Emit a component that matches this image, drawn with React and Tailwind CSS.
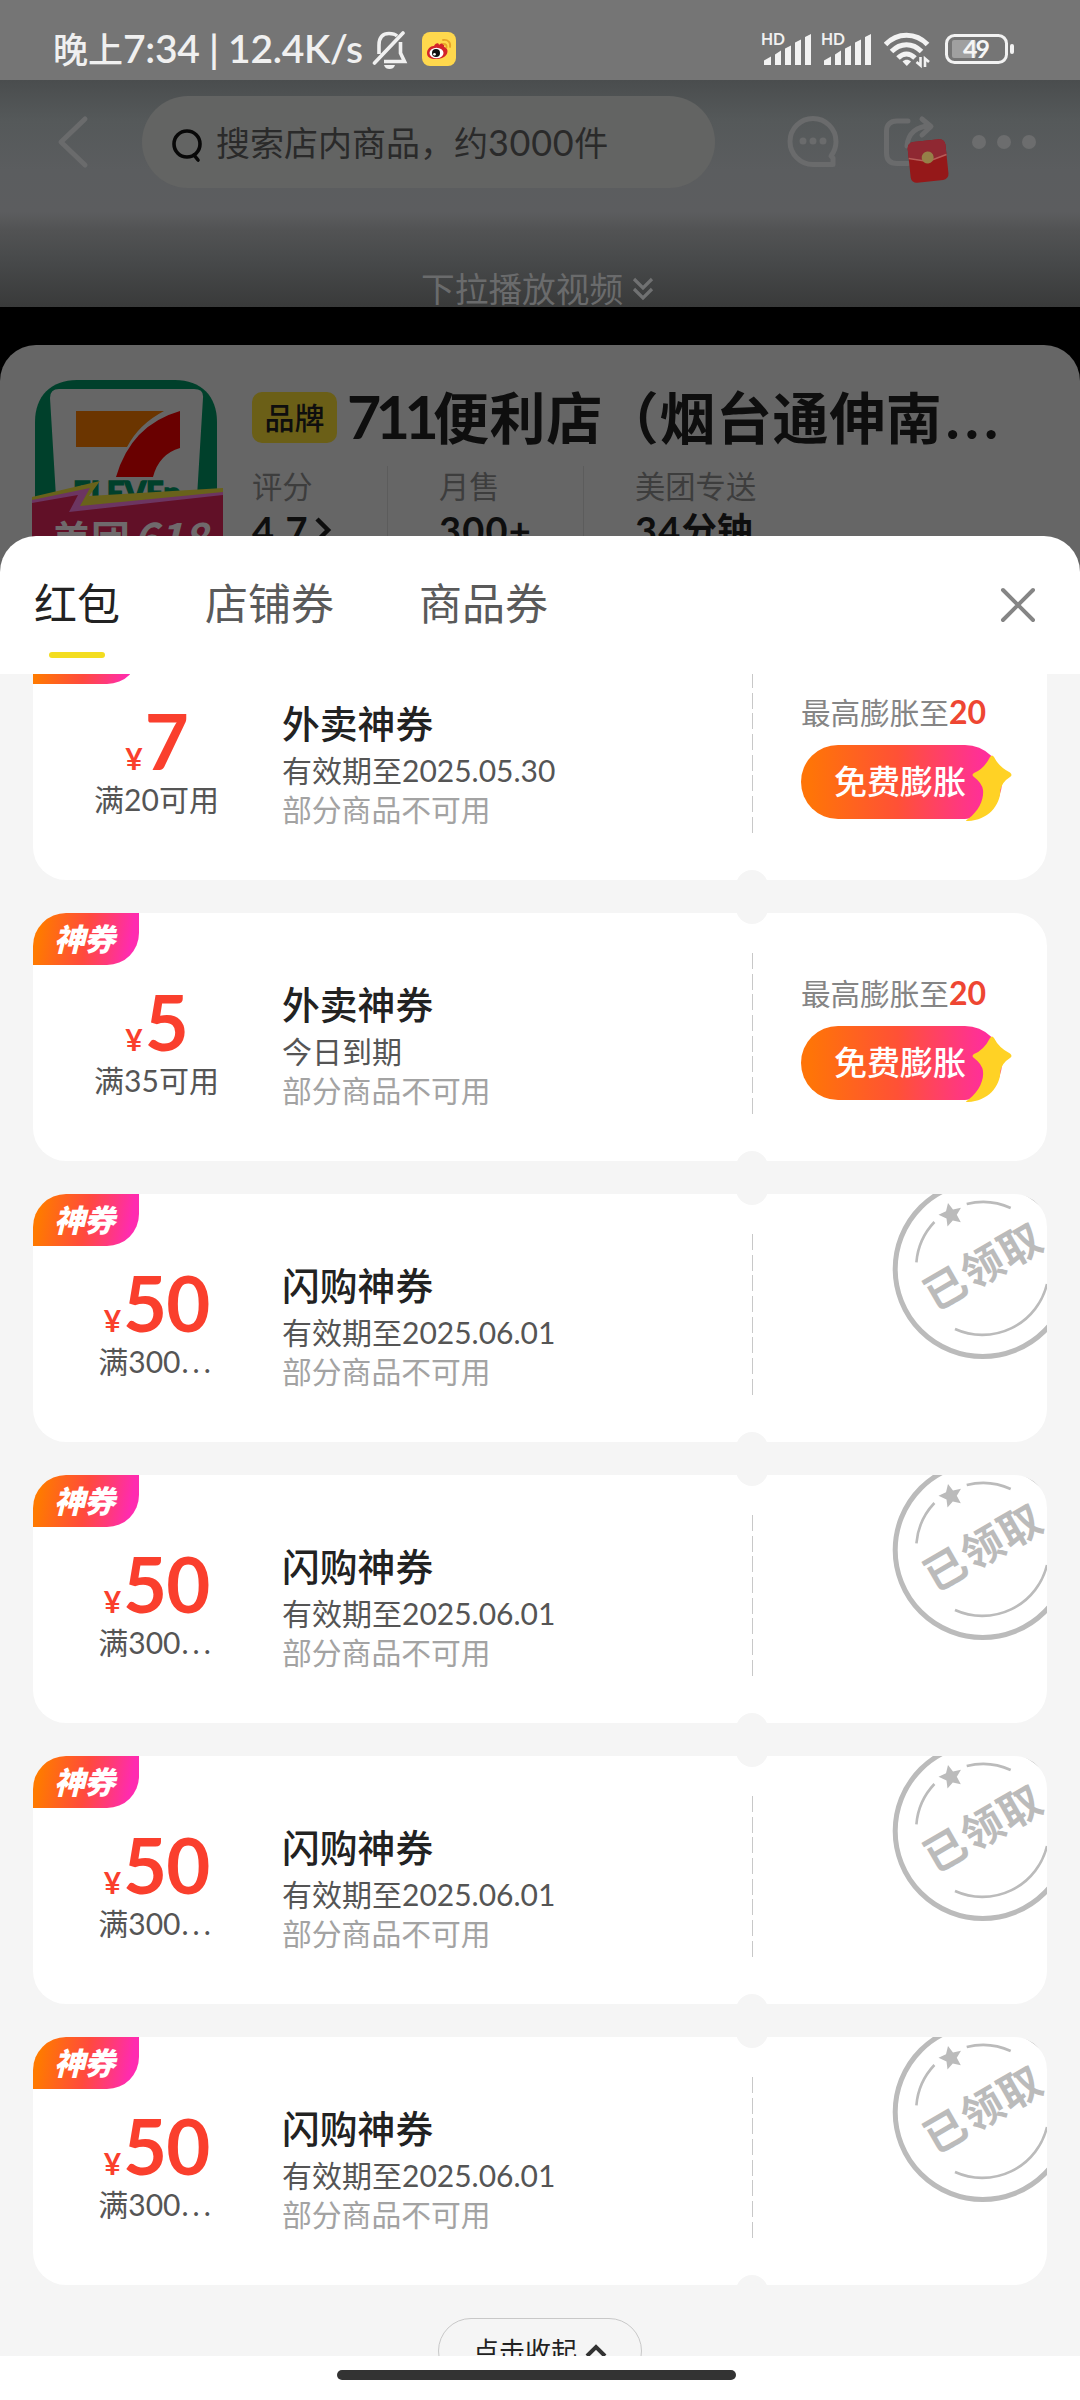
import React from "react";

const coupons = [
  { amount: "7", limit: "满20可用", title: "外卖神券", date: "有效期至2025.05.30", boost: true },
  { amount: "5", limit: "满35可用", title: "外卖神券", date: "今日到期", boost: true },
  { amount: "50", limit: "满300", more: true, title: "闪购神券", date: "有效期至2025.06.01" },
  { amount: "50", limit: "满300", more: true, title: "闪购神券", date: "有效期至2025.06.01" },
  { amount: "50", limit: "满300", more: true, title: "闪购神券", date: "有效期至2025.06.01" },
  { amount: "50", limit: "满300", more: true, title: "闪购神券", date: "有效期至2025.06.01" },
];

function Signal() {
  return (
    <svg width="52" height="36" viewBox="0 0 52 36" className="block overflow-visible">
      <text x="-1" y="13" fontSize="17" fontWeight="700" fill="#f0f0f0" fontFamily="Lato" textLength="24" lengthAdjust="spacingAndGlyphs">HD</text>
      <path d="M2 28.500l7-4v8.500H2z M13 22.500l6-4v14.500h-6z M23 16.500l6-3v19.500h-6z M33 10.500l6-3v25.500h-6z M43 5l6-3v31h-6z" fill="#f2f2f2" />
    </svg>
  );
}

function StatusBar() {
  return (
    <div className="flex h-20 shrink-0 items-start bg-[#757575] text-[#f0f0f0]">
      <div className="ml-[53px] mt-[27px] flex w-[312px] items-baseline whitespace-nowrap text-[35px] leading-[42px] font-medium">
        晚上<span className="text-[39px] font-semibold tracking-[-0.300px]">7:34 | 12.4K/s</span>
      </div>
      <svg className="ml-[7px] mt-[30px]" width="36" height="40" viewBox="0 0 36 40" fill="none" stroke="#f0f0f0" strokeWidth="3.600">
        <path d="M2.500 33L31 3" strokeLinecap="round" />
        <path d="M7 24V15C7 7 11 3.500 17 3.500C21 3.500 23 4 25 6" />
        <path d="M28.500 12V23L32.500 31.500H12" />
        <path d="M12 35H23C22 38 20 39 17.500 39S13 38 12 35Z" fill="#f0f0f0" stroke="none" />
      </svg>
      <svg className="ml-[14px] mt-[32px]" width="34" height="34" viewBox="0 0 34 34">
        <rect width="34" height="34" rx="8" fill="#ffd84d" />
        <path d="M5 21C5 17 9 13.500 12 14c1-3 5-4 5-1 3-3 6-1 5 2 6 1 5 12-8 12C8 27 5 25 5 21z" fill="#d3232b" />
        <ellipse cx="14.500" cy="21" rx="7" ry="5.200" fill="#fff" />
        <circle cx="14" cy="21" r="4" fill="#111" />
        <circle cx="12.500" cy="22.300" r="1.300" fill="#fff" />
        <path d="M21 8c5-1 8 3 7 7M21.500 12c2.500 0 3.500 1 3 3.500" fill="none" stroke="#e8a428" strokeWidth="1.800" strokeLinecap="round" />
      </svg>
      <div className="ml-[306px] mt-[32px]"><Signal /></div>
      <div className="ml-[8px] mt-[32px]"><Signal /></div>
      <svg className="ml-[10px] mt-[32px]" width="48" height="38" viewBox="0 0 48 38" fill="none" stroke="#f2f2f2" strokeWidth="5">
        <path d="M1.500 12.500C13 0 32 0 43.500 12.500M7.500 19.500c9-9 21-9 30 0M14 26c5.500-5.500 11.500-5.500 17 0" />
        <path d="M18.500 29.500c2.500-2.500 6-2.500 8.500 0l-4.200 4.500z" fill="#f2f2f2" stroke="none" />
        <path d="M36.500 25v8.500l-4-3.500M41 35v-8.500l4 3.500" strokeWidth="2.600" />
      </svg>
      <svg className="ml-[13px] mt-[34px]" width="70" height="31" viewBox="0 0 70 31">
        <rect x="1.500" y="1.500" width="60" height="27" rx="8" fill="none" stroke="#f2f2f2" strokeWidth="3" />
        <rect x="7" y="6" width="24" height="18" rx="2" fill="#a0a0a0" />
        <rect x="65" y="10" width="4" height="10" rx="2" fill="#f2f2f2" />
        <text x="18" y="24" fontSize="25" fontWeight="700" fill="#f5f5f5" fontFamily="Lato" textLength="27">49</text>
      </svg>
    </div>
  );
}

function Hero() {
  return (
    <div className="flex h-[227px] shrink-0 flex-col bg-[linear-gradient(180deg,#4a4d4e_0%,#55595a_18%,#5b5d5f_40%,#5c5d5f_58%,#525354_66%,#47494a_80%,#393a3a_100%)]">
      <div className="mt-4 flex h-[92px] items-center">
        <svg className="ml-[56px]" width="34" height="56" viewBox="0 0 34 56" fill="none" stroke="#6a6b6c" strokeWidth="5" strokeLinecap="round" strokeLinejoin="round">
          <path d="M29 5L5 28L29 51" />
        </svg>
        <div className="ml-[52px] flex h-[92px] w-[573px] items-center rounded-full bg-[#636463]">
          <svg className="ml-[28px] mt-2" width="34" height="38" viewBox="0 0 34 38" fill="none" stroke="#080808" strokeWidth="3.600">
            <circle cx="17" cy="17" r="13" />
            <path d="M24 28l4 5" strokeLinecap="round" />
          </svg>
          <div className="ml-[12px] whitespace-nowrap text-[34px] leading-[44px] text-[#2a2a2a]">搜索店内商品，约<span className="text-[36px] tracking-[0.700px]">3000</span>件</div>
        </div>
        <svg className="ml-[70px]" width="56" height="60" viewBox="0 0 56 60" fill="none" stroke="#6a6b6c" strokeWidth="5">
          <path d="M48 46V52.500H28A23 23 0 1 1 51 29.500C51 36 49 40 46 44Z" strokeLinejoin="round" />
          <g fill="#6a6b6c" stroke="none"><circle cx="18" cy="29" r="3.500" /><circle cx="28" cy="29" r="3.500" /><circle cx="38" cy="29" r="3.500" /></g>
        </svg>
        <svg className="ml-[41px] overflow-visible" width="72" height="72" viewBox="0 0 72 72" fill="none" stroke="#6a6b6c" strokeWidth="5">
          <path d="M26 15H15C8 15 4.500 19 4.500 25V47C4.500 54 8 57.500 15 57.500H26" strokeLinecap="round" />
          <path d="M25 40C26 27 35 20 48 20M40 13l9 7.500-9 8.500" strokeLinecap="round" strokeLinejoin="round" />
          <g transform="translate(-3 1.500) rotate(-6 49 53)" stroke="none">
            <rect x="30" y="33" width="38" height="41" rx="6" fill="#951819" />
            <path d="M30 49V39a6 6 0 0 1 6-6h26a6 6 0 0 1 6 6v10L49 54z" fill="#8f2832" />
            <path d="M30 49l19 5 19-5" fill="none" stroke="#b75d59" strokeWidth="1.500" />
            <circle cx="49" cy="50" r="6" fill="#958048" />
          </g>
        </svg>
        <div className="ml-[18px] flex gap-[11px]">
          <i className="size-[14px] rounded-full bg-[#6c6d6e]" />
          <i className="size-[14px] rounded-full bg-[#6c6d6e]" />
          <i className="size-[14px] rounded-full bg-[#6c6d6e]" />
        </div>
      </div>
      <div className="mt-[79px] flex items-center pl-[421px] text-[33.700px] leading-[44px] text-[#6a6b6c]">
        <span className="whitespace-nowrap">下拉播放视频</span>
        <svg className="ml-[9px]" width="22" height="26" viewBox="0 0 22 26" fill="none" stroke="#707172" strokeWidth="3.200">
          <path d="M2 3l9 9 9-9M2 13l9 9 9-9" />
        </svg>
      </div>
    </div>
  );
}

function StoreLogo() {
  return (
    <svg className="ml-8 mt-[35px] shrink-0" width="191" height="200" viewBox="0 0 191 200">
      <path d="M3 200V42C3 16 19 0 45 0H143C169 0 185 16 185 42V200Z" fill="#00402b" />
      <path d="M18 18Q18 9 27 9H162Q172 9 171 18L160 200H29Z" fill="#666" />
      <path d="M44 31H132Q107 44 95 67H44Z" fill="#6b3500" />
      <path d="M148 31V68Q127 74 121 97H84Q99 45 148 31Z" fill="#690000" />
      <text x="41" y="125" fontSize="33" fontWeight="900" fill="#00402b" stroke="#00402b" strokeWidth="1.500" fontFamily="Lato" textLength="108" lengthAdjust="spacingAndGlyphs">ELEVEn</text>
      <path d="M0 117L68 101L57 116L191 108V200H0Z" fill="#69621b" />
      <path d="M0 120L58 108L48 126L191 112V200H0Z" fill="#6c3561" />
      <path d="M0 123L46 115L37 132L191 115V200H0Z" fill="#611027" />
      <text x="20" y="174" fontSize="39" fontWeight="700" fill="#6f6a6c" fontFamily="Noto Sans CJK SC">美团<tspan dx="3" fontSize="42" fontStyle="italic">618</tspan></text>
    </svg>
  );
}

function StoreInfo() {
  const stats = [["评分", "4.7", ""], ["月售", "300+", ""], ["美团专送", "34", "分钟"]];
  return (
    <div className="mt-[38px] flex h-[230px] shrink-0 overflow-hidden rounded-t-[36px] bg-[#666]">
      <StoreLogo />
      <div className="ml-[29px] mt-[37px]">
        <div className="flex h-[70px] items-center">
          <span className="flex h-[51px] w-[85px] items-center justify-center rounded-[10px] bg-[#6b5f17] text-[30px] leading-[40px] font-medium text-[#0e0e0e]">品牌</span>
          <span className="ml-[10px] flex items-baseline whitespace-nowrap text-[56px] leading-[70px] font-bold tracking-[0.600px] text-[#0e0e0e]">
            <span className="w-[86px] text-[59px] tracking-[-5.500px]">711</span>便利店（烟台通伸南<span className="ml-[3px] text-[60px] tracking-[5px]">...</span>
          </span>
        </div>
        <div className="mt-[14px] flex">
          {stats.map(([label, value, unit], i) => (
            <div key={label} className={["w-[135px]", "w-[196px] border-l border-[#5c5c5c] pl-[51px]", "border-l border-[#5c5c5c] pl-[51px]"][i]}>
              <div className="-mt-px whitespace-nowrap text-[30.300px] leading-[42px] text-[#3d3d3d]">{label}</div>
              <div className="-mt-px flex items-center whitespace-nowrap text-[35.500px] leading-[48px] font-bold text-[#0e0e0e]">
                <span className="text-[38px] tracking-[1.200px]">{value}</span>{unit}
                {i === 0 && (
                  <svg className="ml-[5px]" width="18" height="26" viewBox="0 0 18 26" fill="none" stroke="#0e0e0e" strokeWidth="4.500"><path d="M3 2l11 11L3 24" /></svg>
                )}
              </div>
            </div>
          ))}
        </div>
      </div>
    </div>
  );
}

function Stamp() {
  return (
    <svg className="absolute right-0 top-0" width="160" height="180" viewBox="854 0 160 180">
      <g fill="none" stroke="#bbb">
        <circle cx="949.700" cy="75" r="87.500" strokeWidth="5" />
        <path d="M883.400 68.300A66.500 66.500 0 0 1 901.400 28M933.700 10A66.500 66.500 0 0 1 977.700 14M922 135A66.500 66.500 0 0 0 1014 90" strokeWidth="2.600" />
      </g>
      <path d="M914 11l5 6.500 8-1.800-4.200 7 4 7.500-8-1.700-5.300 6-1-8-8-3.800 7.500-3.400z" fill="#bbb" transform="translate(1 -2)" />
      <text x="951" y="87" textAnchor="middle" fontSize="42" fontWeight="700" letterSpacing="1" fill="#bbb" fontFamily="Noto Sans CJK SC" transform="rotate(-30 951.700 74)">已领取</text>
    </svg>
  );
}

function Boost() {
  return (
    <div className="ml-[48px] w-[213px] pt-[60px]">
      <div className="whitespace-nowrap text-[29.600px] leading-[42px] text-[#858585]">最高膨胀至<b className="text-[32px]/[32px] text-[#ee4632]">20</b></div>
      <div className="relative mt-[11px] flex h-[74px] w-[201px] items-center rounded-full bg-[linear-gradient(90deg,#ff7408_5%,#ff5136_48%,#ff2e9c_92%)] pl-[33px]">
        <span className="-mt-[2px] whitespace-nowrap text-[33px] leading-[44px] font-medium text-white">免费膨胀</span>
        <svg className="absolute left-[163px] top-[9px]" width="50" height="68" viewBox="0 0 50 68">
          <path d="M26 3Q28 0 30 3Q35 13 46 18.500Q49 21 46 23Q38 28 36.500 36C36 52 24 66 4 67Q0 67 4 65C16 56 20 44 19 36Q18 29 10 23Q7 21 10 19Q20 15 26 3Z" fill="#ffd225" />
        </svg>
      </div>
    </div>
  );
}

function Coupon({ amount, limit, more, title, date, boost }) {
  return (
    <div className="relative flex h-[248px] shrink-0 overflow-hidden rounded-[33px] bg-white">
      <div className="absolute left-0 top-0 flex h-[52px] w-[106px] items-center rounded-br-[32px] bg-[linear-gradient(100deg,#ff7a00_8%,#ff4a3d_50%,#ff2bb0_90%)] pl-[21px]">
        <span className="text-[31px] leading-[40px] font-black italic tracking-[-1px] text-white">神券</span>
      </div>
      <div className="w-[247px] shrink-0 pt-[72px] text-center">
        <div className="flex h-[74px] items-baseline justify-center gap-[2px] font-bold leading-[74px] text-[#fa3f2d]">
          <span className="text-[30px]">¥</span>
          <span className="text-[76px] tracking-[-1px]">{amount}</span>
        </div>
        <div className="whitespace-nowrap text-[30px] leading-[42px] text-[#555]">
          {limit}{more && <span className="ml-px tracking-[4px]">...</span>}
        </div>
      </div>
      <div className="w-[472px] shrink-0 pl-[2px] pt-[66px]">
        <div className="text-[37.800px] leading-[52px] font-medium text-[#222]">{title}</div>
        <div className="-mt-px text-[30px] leading-[42px] text-[#555]">{date}</div>
        <div className="text-[29.800px] leading-[38px] text-[#a3a3a3]">部分商品不可用</div>
      </div>
      <div className="mt-[40px] h-[161px] w-px shrink-0 bg-[repeating-linear-gradient(180deg,#c8c8c8_0,#c8c8c8_16px,transparent_16px,transparent_20.700px)]" />
      <i className="absolute left-[703px] top-[-21.500px] size-8 rounded-full bg-[#f5f5f5]" />
      <i className="absolute bottom-[-21.500px] left-[703px] size-8 rounded-full bg-[#f5f5f5]" />
      {boost ? <Boost /> : <Stamp />}
    </div>
  );
}

export default function App() {
  return (
    <div className="flex h-[2400px] w-[1080px] flex-col overflow-hidden bg-black font-['Lato','Noto_Sans_CJK_SC',sans-serif]">
      <StatusBar />
      <Hero />
      <StoreInfo />
      <div className="relative -mt-[39px] flex grow flex-col rounded-t-[36px] bg-white">
        <div className="flex h-[138px] shrink-0 items-start pt-[41px] text-[43px] leading-[54px] text-[#5a5a5a]">
          <div className="ml-[34px] flex w-[86px] flex-col items-center whitespace-nowrap text-[#222]">
            红包
            <i className="mt-[21px] h-[6px] w-[56px] rounded-full bg-[#f3dd20]" />
          </div>
          <div className="ml-[85px] whitespace-nowrap">店铺券</div>
          <div className="ml-[85px] whitespace-nowrap">商品券</div>
          <svg className="ml-auto mr-[44px] mt-[10px]" width="36" height="36" viewBox="0 0 36 36" stroke="#858585" strokeWidth="4" strokeLinecap="round"><path d="M3 3l30 30M33 3L3 33" /></svg>
        </div>
        <div className="flex h-[1682px] shrink-0 flex-col overflow-hidden bg-[#f5f5f5] px-[33px]">
          <div className="-mt-[42px] flex flex-col gap-[33px]">
            {coupons.map((c, i) => <Coupon key={i} {...c} />)}
          </div>
          <div className="mt-[33px] flex h-[66px] w-[204px] shrink-0 items-center justify-center self-center rounded-full border border-[#c8c8c8] text-[26px] leading-[36px] text-[#222]">
            点击收起
            <svg className="ml-[8px]" width="22" height="16" viewBox="0 0 22 16" fill="none" stroke="#333" strokeWidth="4"><path d="M2 13l9-9 9 9" /></svg>
          </div>
        </div>
        <div className="ml-[337px] mt-[14px] h-[10px] w-[399px] rounded-full bg-[#333]" />
      </div>
    </div>
  );
}
